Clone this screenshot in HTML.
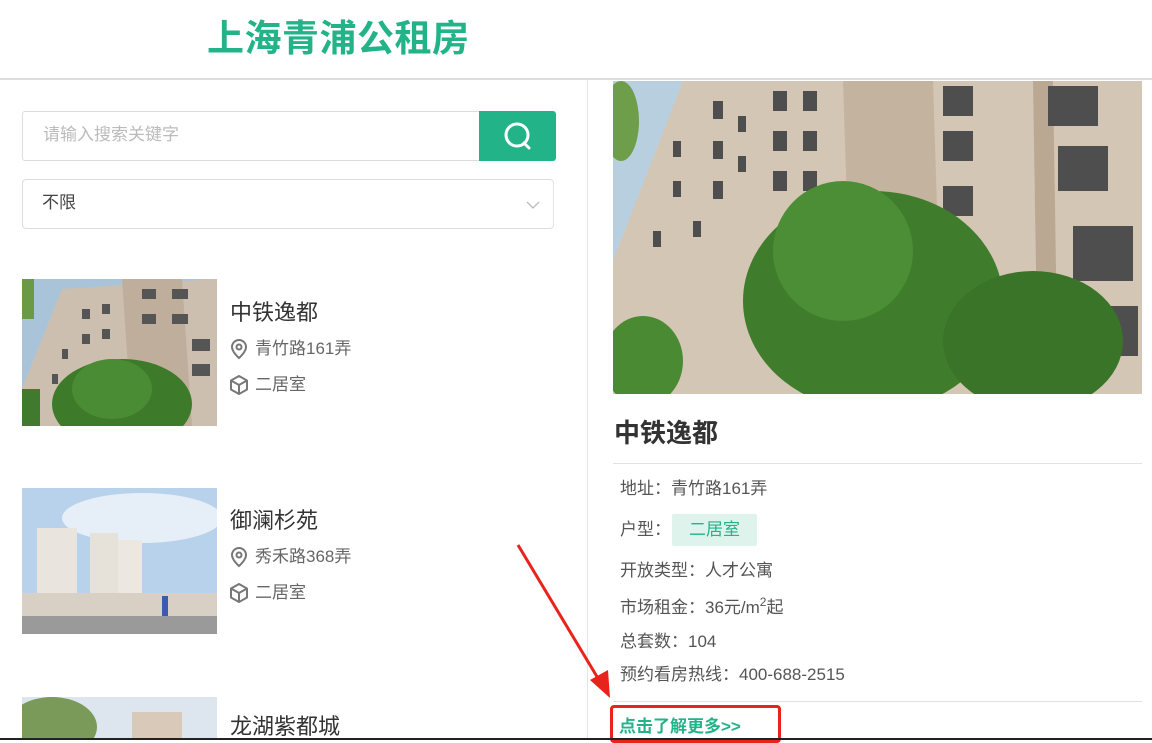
<!DOCTYPE html>
<html><head><meta charset="utf-8">
<style>
*{margin:0;padding:0;box-sizing:border-box}
body{width:1152px;height:740px;overflow:hidden;background:#fff;font-family:"Liberation Sans","Noto Sans CJK SC",sans-serif;color:#333;position:relative}
.abs{position:absolute}
.title{left:207px;top:8px;font-size:37px;font-weight:bold;color:#22b389;letter-spacing:0.5px}
.hline{left:0;top:78px;width:1152px;height:2px;background:#ddd}
.vline{left:587px;top:80px;width:1px;height:660px;background:#e5e5e5}
.search{left:22px;top:111px;width:458px;height:50px;border:1px solid #ddd;border-right:none;border-radius:3px 0 0 3px;font-size:17px;color:#bbb;padding:0 20px;line-height:46px}
.sbtn{left:479px;top:111px;width:77px;height:50px;background:#22b389;border-radius:0 3px 3px 0}
.sel{left:22px;top:179px;width:532px;height:50px;border:1px solid #ddd;border-right-color:#e5e5e5;border-radius:4px;font-size:17px;color:#444;padding:0 19px;line-height:46px}
.item h3{font-weight:normal;font-size:22px;color:#333;line-height:26px}
.meta{font-size:17px;color:#666;display:flex;align-items:center;gap:6px;line-height:22px;height:22px}
.det{font-size:17px;color:#555;line-height:20px}
</style></head><body>
<div class="abs title">上海青浦公租房</div>
<div class="abs hline"></div>
<div class="abs vline"></div>
<div class="abs search">请输入搜索关键字</div>
<div class="abs sbtn"><svg width="77" height="50"><circle cx="38" cy="24" r="11" fill="none" stroke="#fff" stroke-width="3"/><line x1="45" y1="32" x2="50" y2="37" stroke="#fff" stroke-width="3" stroke-linecap="round"/></svg></div>
<div class="abs sel">不限<svg class="abs" style="left:503px;top:20px" width="14" height="10"><polyline points="1,2 7,8 13,2" fill="none" stroke="#bbb" stroke-width="1.3"/></svg></div>

<svg class="abs" style="left:22px;top:279px" width="195" height="147">
<rect width="195" height="147" fill="#a9c4d8"/>
<polygon points="0,147 0,110 40,10 195,0 195,147" fill="#cdbfaf"/>
<polygon points="100,0 160,0 170,147 110,147" fill="#bfae9b"/>
<g fill="#555"><rect x="120" y="10" width="14" height="10"/><rect x="150" y="10" width="16" height="10"/><rect x="120" y="35" width="14" height="10"/><rect x="150" y="35" width="16" height="10"/><rect x="170" y="60" width="18" height="12"/><rect x="170" y="85" width="18" height="12"/><rect x="60" y="30" width="8" height="10"/><rect x="80" y="25" width="8" height="10"/><rect x="60" y="55" width="8" height="10"/><rect x="80" y="50" width="8" height="10"/><rect x="40" y="70" width="6" height="10"/><rect x="30" y="95" width="6" height="10"/></g>
<ellipse cx="100" cy="125" rx="70" ry="45" fill="#3d7a2a"/><ellipse cx="90" cy="110" rx="40" ry="30" fill="#4a8c34"/><rect x="0" y="0" width="12" height="40" fill="#6a9a45"/><rect x="0" y="110" width="18" height="37" fill="#3f7a2e"/>
</svg>
<div class="abs item" style="left:230px;top:300px"><h3>中铁逸都</h3></div>
<div class="abs meta" style="left:229px;top:338px"><svg width="20" height="22"><path d="M10 2a7 7 0 0 1 7 7c0 5-7 11-7 11S3 14 3 9a7 7 0 0 1 7-7z" fill="none" stroke="#777" stroke-width="2"/><circle cx="10" cy="9" r="2.5" fill="none" stroke="#777" stroke-width="2"/></svg>青竹路161弄</div>
<div class="abs meta" style="left:229px;top:374px"><svg width="20" height="22"><path d="M10 2l8 4.5v9L10 20l-8-4.5v-9z M2 6.5l8 4.5 8-4.5 M10 11v9" fill="none" stroke="#777" stroke-width="2" stroke-linejoin="round"/></svg>二居室</div>

<svg class="abs" style="left:22px;top:488px" width="195" height="146">
<rect width="195" height="146" fill="#b9d2ec"/><ellipse cx="120" cy="30" rx="80" ry="25" fill="#e6eef7"/>
<rect x="15" y="40" width="40" height="80" fill="#e9e5de"/><rect x="68" y="45" width="28" height="75" fill="#e6e2da"/><rect x="96" y="52" width="24" height="68" fill="#ece8e1"/>
<rect x="0" y="105" width="195" height="25" fill="#d8d0c5"/><rect x="140" y="108" width="6" height="40" fill="#3a5bb0"/>
<rect x="0" y="128" width="195" height="18" fill="#9a9a9a"/>
</svg>
<div class="abs item" style="left:230px;top:508px"><h3>御澜杉苑</h3></div>
<div class="abs meta" style="left:229px;top:546px"><svg width="20" height="22"><path d="M10 2a7 7 0 0 1 7 7c0 5-7 11-7 11S3 14 3 9a7 7 0 0 1 7-7z" fill="none" stroke="#777" stroke-width="2"/><circle cx="10" cy="9" r="2.5" fill="none" stroke="#777" stroke-width="2"/></svg>秀禾路368弄</div>
<div class="abs meta" style="left:229px;top:582px"><svg width="20" height="22"><path d="M10 2l8 4.5v9L10 20l-8-4.5v-9z M2 6.5l8 4.5 8-4.5 M10 11v9" fill="none" stroke="#777" stroke-width="2" stroke-linejoin="round"/></svg>二居室</div>

<svg class="abs" style="left:22px;top:697px" width="195" height="43">
<rect width="195" height="43" fill="#dde6ee"/><ellipse cx="30" cy="30" rx="45" ry="30" fill="#7a9a5a"/><rect x="110" y="15" width="50" height="30" fill="#d8c9b8"/>
</svg>
<div class="abs item" style="left:230px;top:714px"><h3>龙湖紫都城</h3></div>

<svg class="abs" style="left:613px;top:81px" width="529" height="313">
<rect width="529" height="313" fill="#b8cfe0"/>
<polygon points="0,313 0,180 70,0 529,0 529,313" fill="#d4c6b4"/>
<polygon points="230,0 320,0 330,313 240,313" fill="#c4b39f"/>
<polygon points="420,0 440,0 445,313 425,313" fill="#bba892"/>
<g fill="#4e4e4e">
<rect x="330" y="5" width="30" height="30"/><rect x="435" y="5" width="50" height="40"/><rect x="330" y="50" width="30" height="30"/><rect x="445" y="65" width="50" height="45"/><rect x="330" y="105" width="30" height="30"/><rect x="460" y="145" width="60" height="55"/><rect x="470" y="225" width="55" height="50"/>
<rect x="160" y="10" width="14" height="20"/><rect x="190" y="10" width="14" height="20"/><rect x="160" y="50" width="14" height="20"/><rect x="190" y="50" width="14" height="20"/><rect x="160" y="90" width="14" height="20"/><rect x="190" y="90" width="14" height="20"/>
<rect x="100" y="20" width="10" height="18"/><rect x="100" y="60" width="10" height="18"/><rect x="100" y="100" width="10" height="18"/><rect x="60" y="60" width="8" height="16"/><rect x="60" y="100" width="8" height="16"/><rect x="40" y="150" width="8" height="16"/><rect x="125" y="35" width="8" height="16"/><rect x="125" y="75" width="8" height="16"/><rect x="80" y="140" width="8" height="16"/>
</g>
<ellipse cx="260" cy="220" rx="130" ry="110" fill="#3f7d2c"/><ellipse cx="230" cy="170" rx="70" ry="70" fill="#4c8e35"/><ellipse cx="420" cy="260" rx="90" ry="70" fill="#3a7428"/><ellipse cx="30" cy="280" rx="40" ry="45" fill="#4a8a33"/><ellipse cx="8" cy="40" rx="18" ry="40" fill="#6e9e4a"/>
</svg>

<div class="abs" style="left:614px;top:416px;font-size:26px;font-weight:bold;color:#333;line-height:34px">中铁逸都</div>
<div class="abs" style="left:613px;top:463px;width:529px;height:1px;background:#e2e2e2"></div>
<div class="abs det" style="left:620px;top:479px">地址：青竹路161弄</div>
<div class="abs det" style="left:620px;top:520px">户型：</div>
<div class="abs" style="left:672px;top:514px;width:85px;height:32px;background:#ddf3ec;color:#22b389;font-size:17px;text-align:center;line-height:32px;border-radius:2px">二居室</div>
<div class="abs det" style="left:620px;top:561px">开放类型：人才公寓</div>
<div class="abs det" style="left:620px;top:598px">市场租金：36元/m<span style="font-size:12px;position:relative;top:-7px">2</span>起</div>
<div class="abs det" style="left:620px;top:632px">总套数：104</div>
<div class="abs det" style="left:620px;top:665px">预约看房热线：400-688-2515</div>
<div class="abs" style="left:613px;top:701px;width:529px;height:1px;background:#e2e2e2"></div>
<div class="abs" style="left:619px;top:716px;font-size:17px;font-weight:bold;color:#22b389;line-height:22px">点击了解更多&gt;&gt;</div>
<div class="abs" style="left:610px;top:705px;width:171px;height:38px;border:3px solid #e8231b;border-radius:4px"></div>
<svg class="abs" style="left:510px;top:540px" width="110" height="160"><line x1="8" y1="5" x2="92" y2="145" stroke="#e8231b" stroke-width="3"/><polygon points="100,158 80,140 98,130" fill="#e8231b"/></svg>
<div class="abs" style="left:0;top:738px;width:1152px;height:2px;background:#222"></div>
</body></html>
